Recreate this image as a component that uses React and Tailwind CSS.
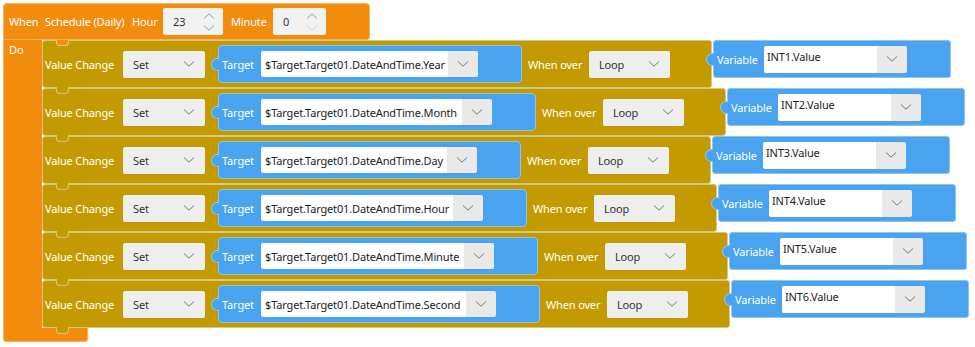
const rows = [
  { unit: 'Year', iw: 'w-[187px]', v: 'INT1.Value' },
  { unit: 'Month', iw: 'w-[201px]', v: 'INT2.Value' },
  { unit: 'Day', iw: 'w-[186px]', v: 'INT3.Value' },
  { unit: 'Hour', iw: 'w-[192px]', v: 'INT4.Value' },
  { unit: 'Minute', iw: 'w-[203px]', v: 'INT5.Value' },
  { unit: 'Second', iw: 'w-[205px]', v: 'INT6.Value' },
]

function Chevron({ up = false, color = '#777' }) {
  return (
    <svg width="12" height="6" viewBox="0 0 12 6" fill="none">
      <polyline
        points={up ? '1,5.5 6,0.8 11,5.5' : '1,0.5 6,5.2 11,0.5'}
        stroke={color}
        strokeWidth="1"
      />
    </svg>
  )
}

function Dropdown({ text, w }) {
  return (
    <div className={`${w} h-[27px] bg-[#eeeeee] rounded-[2px] flex items-center justify-between pl-[10px] pr-[10px] text-[#333]`}>
      <span>{text}</span>
      <Chevron />
    </div>
  )
}

function Field({ text, w }) {
  return (
    <div className="flex h-[26px] rounded-[2px] overflow-hidden">
      <div className={`${w} bg-white flex items-center pl-[4px] text-[#222] whitespace-nowrap`}>{text}</div>
      <div className="w-[30px] bg-[#e9e9e9] flex items-center justify-center">
        <Chevron />
      </div>
    </div>
  )
}

function Tab({ className }) {
  return <div className={`absolute w-[8px] h-[13px] bg-[#4aa3ef] rounded-l-full border-l border-y border-[#8cc6f5] ${className}`} />
}

function Row({ r, first }) {
  return (
    <div className="flex items-start">
      <div className="relative h-[48px] bg-[#c39b00] border border-[#d6c582] rounded-[3px] flex items-center pl-[2px] pr-[41px] text-white">
        {first && <div className="absolute left-[13px] -top-[1px] w-[13px] h-[6px] bg-[#f28c0f] rounded-b-[4px] border-x border-b border-[#e8c98a]" />}
        <div className="absolute left-[13px] -bottom-[7px] w-[13px] h-[7px] bg-[#c39b00] rounded-b-[4px] border-x border-b border-[#d6c582] z-10" />
        <span className="w-[78px] whitespace-nowrap">Value Change</span>
        <Dropdown text="Set" w="w-[82px]" />
        <div className="relative ml-[13px] h-[38px] bg-[#4aa3ef] border border-[#8cc6f5] rounded-[4px] flex items-center pl-[3px] pr-[43px]">
          <Tab className="-left-[8px] top-[12px]" />
          <span className="w-[39px]">Target</span>
          <Field text={`$Target.Target01.DateAndTime.${r.unit}`} w={r.iw} />
        </div>
        <span className="ml-[6px] w-[61px] whitespace-nowrap">When over</span>
        <Dropdown text="Loop" w="w-[81px]" />
      </div>
      <div className="relative ml-[1px] w-[238px] h-[38px] bg-[#4aa3ef] border border-[#8cc6f5] rounded-[3px] flex items-center pl-[3px] text-white">
        <Tab className="-left-[8px] top-[12px]" />
        <span className="w-[47px]">Variable</span>
        <div className="flex h-[27px] rounded-[2px] overflow-hidden">
          <div className="w-[113px] bg-white flex items-center pl-[3px] pb-[5px] text-[#222]">{r.v}</div>
          <div className="w-[30px] bg-[#e9e9e9] flex items-center justify-center">
            <Chevron />
          </div>
        </div>
      </div>
    </div>
  )
}

function Spinner({ value, w, downColor }) {
  return (
    <div className={`${w} h-[27px] bg-[#f1f1f1] rounded-[2px] flex items-center justify-between pl-[10px] pr-[8px] text-[#333]`}>
      <span>{value}</span>
      <div className="flex flex-col gap-[6px]">
        <Chevron up color="#9a9a9a" />
        <Chevron color={downColor} />
      </div>
    </div>
  )
}

export default function App() {
  return (
    <div className="w-[975px] h-[347px] bg-white pt-[3px] pl-[3px] overflow-hidden text-[11px] leading-none tracking-[-0.15px]" style={{ fontFamily: '"Noto Sans", "Open Sans", sans-serif' }}>
      <div className="flex flex-col w-fit">
        <div className="w-[367px] h-[37px] bg-[#f28c0f] border border-[#f5b060] rounded-t-[4px] rounded-br-[3px] flex items-center pl-[5px] text-white whitespace-nowrap">
          <span className="w-[36px]">When</span>
          <span className="w-[87px]">Schedule (Daily)</span>
          <span className="w-[31px]">Hour</span>
          <Spinner value="23" w="w-[60px]" downColor="#9a9a9a" />
          <span className="ml-[8px] w-[42px]">Minute</span>
          <Spinner value="0" w="w-[53px]" downColor="#cfcfcf" />
        </div>
        <div className="flex">
          <div className="w-[39px] bg-[#f28c0f] border-l border-[#f5b060] pl-[5px] pt-[4px] text-white">Do</div>
          <div className="flex flex-col">
            {rows.map((r, i) => (
              <Row key={r.unit} r={r} first={i === 0} />
            ))}
          </div>
        </div>
        <div className="w-[85px] h-[14px] bg-[#f28c0f] border-l border-b border-r border-[#f5b060] rounded-b-[3px]" />
      </div>
    </div>
  )
}
